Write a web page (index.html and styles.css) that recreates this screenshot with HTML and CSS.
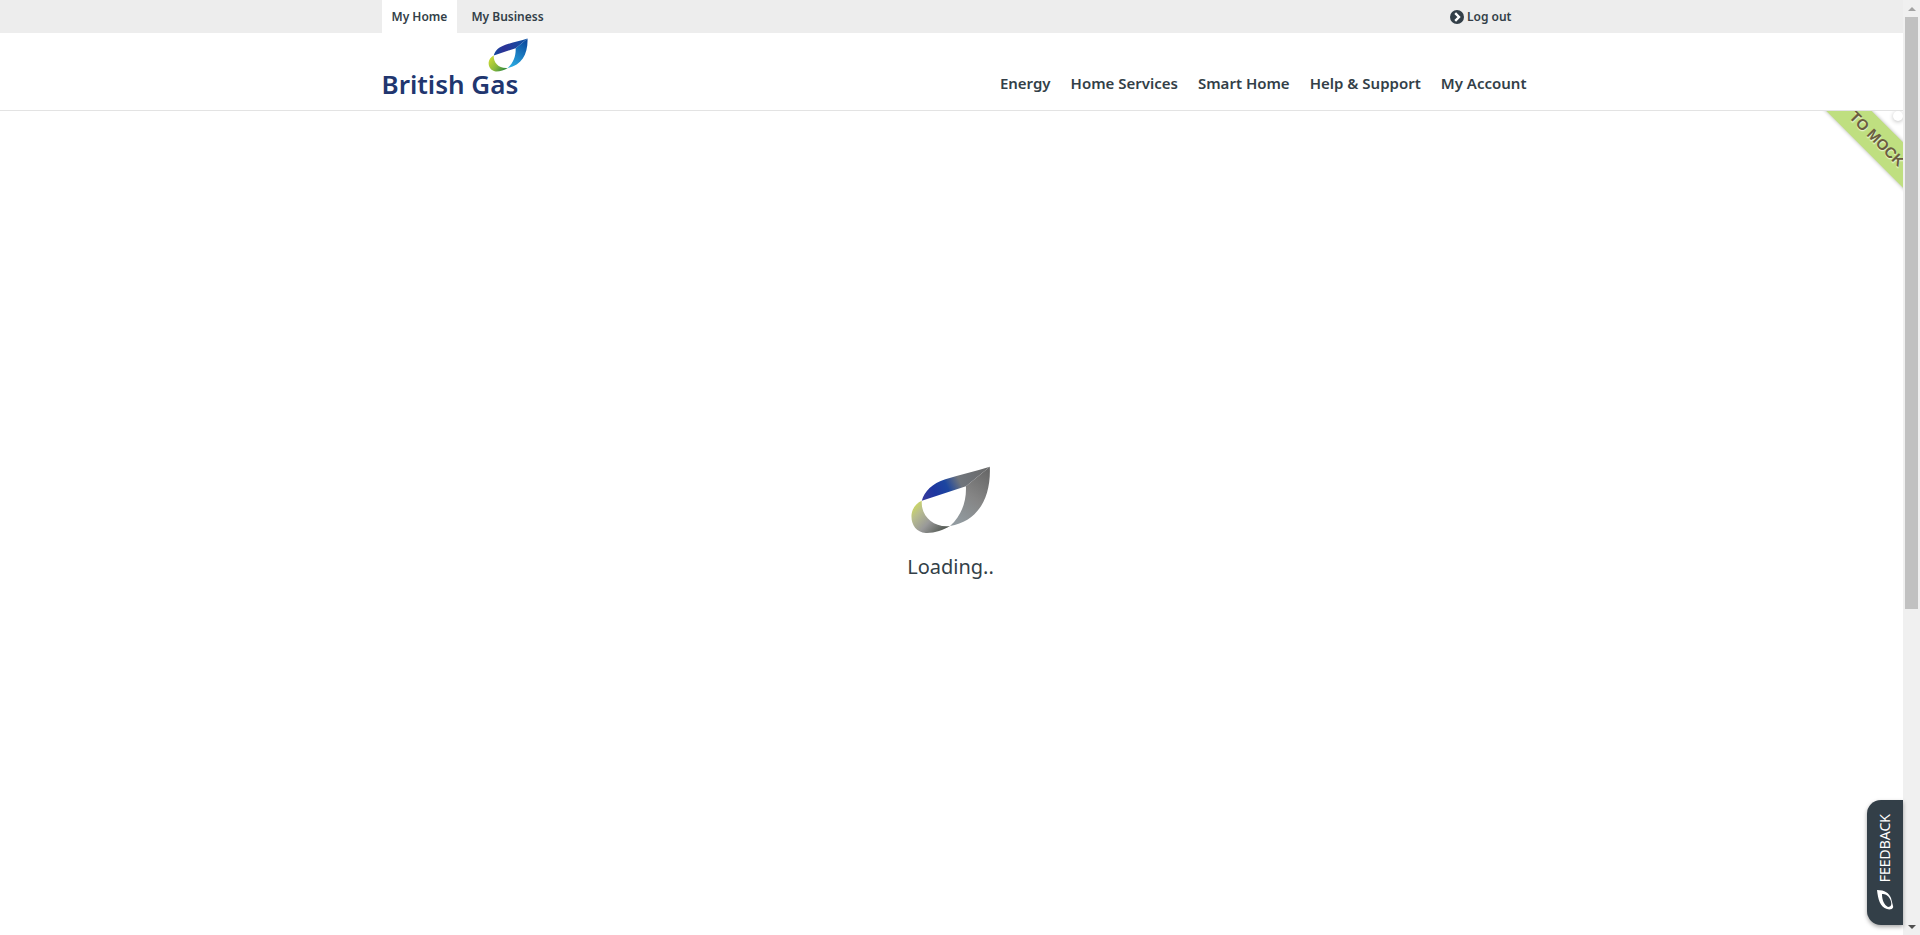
FILE: index.html
```html
<!DOCTYPE html>
<html lang="en">
<head>
<meta charset="utf-8">
<title>British Gas</title>
<link rel="stylesheet" href="styles.css">
</head>
<body>
<div class="page">
  <div class="view">
    <div class="topbar">
      <div class="container topbar-row">
        <nav class="sites" aria-label="Sites">
          <a class="site site-active" href="#">My Home</a>
          <a class="site" href="#">My Business</a>
        </nav>
        <a class="logout" href="#">
          <svg class="logout-icon" viewBox="0 0 14 14" aria-hidden="true"><circle cx="7" cy="7" r="7" fill="#333f48"/><path d="M5.200 3.200 9 7l-3.800 3.800" fill="none" stroke="#fff" stroke-width="2.400"/></svg>
          Log out
        </a>
      </div>
    </div>
    <header class="header">
      <div class="container header-row">
        <a class="brand" href="#">
          <svg class="brand-flame" viewBox="60 46 243 205" aria-hidden="true">
            <defs>
              <linearGradient id="bt" x1="0" y1="0" x2="1" y2="0"><stop offset="0" stop-color="#10499f"/><stop offset=".3" stop-color="#2d3296"/><stop offset="1" stop-color="#0b55a5"/></linearGradient>
              <linearGradient id="br" x1=".8" y1="0" x2=".3" y2="1"><stop offset="0" stop-color="#0a489d"/><stop offset="1" stop-color="#2aa9e0"/></linearGradient>
              <linearGradient id="bg" x1="0" y1=".2" x2="1" y2=".9"><stop offset="0" stop-color="#cddb35"/><stop offset=".5" stop-color="#8cba3c"/><stop offset="1" stop-color="#1d7f40"/></linearGradient>
            </defs>
            <path fill="url(#br)" d="M300 48C304 140 266 212 180 227C216 194 230 152 228 107Z"/>
            <path fill="url(#bt)" d="M95 151C103 122 126 99 166 86C211 71 256 62 300 48L228 107Z"/>
            <path fill="url(#bg)" d="M95 151C91 195 129 233 180 227C159 240 132 249 107 248C77 245 62 221 64 193C66 174 78 158 95 151Z"/>
          </svg>
          <span class="brand-name">British Gas</span>
        </a>
        <nav class="menu" aria-label="Main">
          <a href="#">Energy</a>
          <a href="#">Home Services</a>
          <a href="#">Smart Home</a>
          <a href="#">Help &amp; Support</a>
          <a href="#">My Account</a>
        </nav>
      </div>
    </header>
    <main class="main">
      <div class="loader">
        <svg class="loader-flame" viewBox="60 46 243 205" aria-hidden="true">
          <defs>
            <linearGradient id="lt" gradientUnits="userSpaceOnUse" x1="95" y1="150" x2="300" y2="48"><stop offset="0" stop-color="#3a3a9c"/><stop offset=".2" stop-color="#1f37a0"/><stop offset=".38" stop-color="#1c46a0"/><stop offset=".56" stop-color="#70757c"/><stop offset="1" stop-color="#686868"/></linearGradient>
            <linearGradient id="lr" x1=".8" y1="0" x2=".3" y2="1"><stop offset="0" stop-color="#686868"/><stop offset=".5" stop-color="#858585"/><stop offset="1" stop-color="#929ba0"/></linearGradient>
            <linearGradient id="lg" x1="0" y1=".1" x2="1" y2=".9"><stop offset="0" stop-color="#d2df55"/><stop offset=".25" stop-color="#b8bd8e"/><stop offset=".55" stop-color="#999"/><stop offset="1" stop-color="#404840"/></linearGradient>
          </defs>
          <path fill="url(#lr)" d="M300 48C304 140 266 212 180 227C216 194 230 152 228 107Z"/>
          <path fill="url(#lt)" d="M95 151C103 122 126 99 166 86C211 71 256 62 300 48L228 107Z"/>
          <path fill="url(#lg)" d="M95 151C91 195 129 233 180 227C159 240 132 249 107 248C77 245 62 221 64 193C66 174 78 158 95 151Z"/>
        </svg>
        <p class="loader-text">Loading..</p>
      </div>
      <div class="corner">
        <button class="ribbon" type="button">TO MOCK</button>
        <span class="dot"></span>
      </div>
    </main>
    <button class="feedback" type="button">
      <span>FEEDBACK</span>
      <svg class="feedback-icon" viewBox="0 0 18 22" aria-hidden="true"><path fill="#fff" fill-rule="evenodd" d="M1 1C9 1 13 4 15 9L17 17C18 20 14 21 11 20C4 18 2 10 1 1ZM6 5C6 11 8 16 12 18C16 18 16 14 14 10C12 6 9 5 6 5Z"/></svg>
    </button>
  </div>
  <div class="scroll" aria-hidden="true">
    <span class="arrow arrow-up"></span>
    <div class="track"><div class="thumb"></div></div>
    <span class="arrow arrow-down"></span>
  </div>
</div>
</body>
</html>
```
FILE: styles.css
```css
* { box-sizing: border-box; }
body {
  margin: 0;
  background: #fff;
  color: #333f48;
  font-family: "Noto Sans", "Open Sans", sans-serif;
}
a { color: inherit; text-decoration: none; }
button { border: 0; margin: 0; padding: 0; cursor: pointer; }

.page { display: flex; height: 100vh; overflow: hidden; }
.view { position: relative; flex: 1; min-width: 0; display: flex; flex-direction: column; }
.container { max-width: 1170px; margin: 0 auto; padding: 0 10px 0 15px; }

.topbar { background: #ededed; }
.topbar-row { display: flex; justify-content: space-between; }
.sites { display: flex; gap: 4px; }
.site { padding: 0 10px; font-size: 12px; font-weight: 600; line-height: 33px; }
.site-active { background: #fff; }
.logout { display: flex; align-items: center; gap: 3px; padding-right: 15px; font-size: 12px; font-weight: 600; line-height: 33px; }
.logout-icon { width: 14px; height: 14px; }

.header { border-bottom: 1px solid #e3e3e3; }
.header-row { display: flex; justify-content: space-between; align-items: flex-end; padding-top: 5px; padding-bottom: 11px; }
.brand { display: flex; flex-direction: column; width: 146px; }
.brand-flame { width: 40px; height: 34px; align-self: flex-end; }
.brand-name { margin-top: -2px; color: #21366f; font-size: 26px; font-weight: 600; line-height: 29px; white-space: nowrap; }
.menu { display: flex; gap: 20px; padding-bottom: 6px; font-size: 15px; font-weight: 600; line-height: 20px; white-space: nowrap; }

.main { position: relative; flex: 1; display: flex; justify-content: center; align-items: center; }
.loader { display: flex; flex-direction: column; align-items: center; padding: 2px 2px 0 0; }
.loader-flame { width: 81px; height: 68px; }
.loader-text { margin: 18px 0 0; font-size: 20px; line-height: 30px; }

.corner { position: absolute; top: 0; right: 0; width: 100px; height: 100px; overflow: hidden; }
.ribbon {
  position: absolute;
  top: 12px;
  right: -74px;
  width: 200px;
  height: 32px;
  transform: rotate(45deg);
  background: #bfdf80;
  box-shadow: 0 0 4px rgba(0, 0, 0, .3);
  color: #6b5c40;
  font: 700 15px/32px "Liberation Sans", Arial, sans-serif;
  text-shadow: 1px 1px 1px #e8f4cc;
}
.dot { position: absolute; top: 0; right: 0; width: 10px; height: 10px; border-radius: 50%; background: #fff; box-shadow: 0 1px 4px rgba(0, 0, 0, .25); }

.feedback {
  position: absolute;
  right: 0;
  bottom: 10px;
  display: flex;
  flex-direction: column;
  align-items: center;
  gap: 7px;
  width: 36px;
  padding: 14px 0;
  border-radius: 14px 0 0 14px;
  background: #333f48;
  box-shadow: 0 2px 4px rgba(0, 0, 0, .35);
  color: #fff;
  font: 400 14px/18px "Noto Sans", sans-serif;
}
.feedback span { writing-mode: vertical-rl; transform: rotate(180deg); }
.feedback-icon { width: 18px; height: 22px; }

.scroll { display: flex; flex-direction: column; width: 17px; background: #f0f0f0; }
.arrow { height: 17px; display: flex; justify-content: center; align-items: center; }
.arrow::before { content: ""; border: 4px solid transparent; }
.arrow-up::before { border-top: 0; border-bottom-color: #a3a3a3; }
.arrow-down::before { border-bottom: 0; border-top-color: #505050; }
.track { flex: 1; padding: 0 2px; }
.thumb { height: 65.7%; background: #c1c1c1; }
```
